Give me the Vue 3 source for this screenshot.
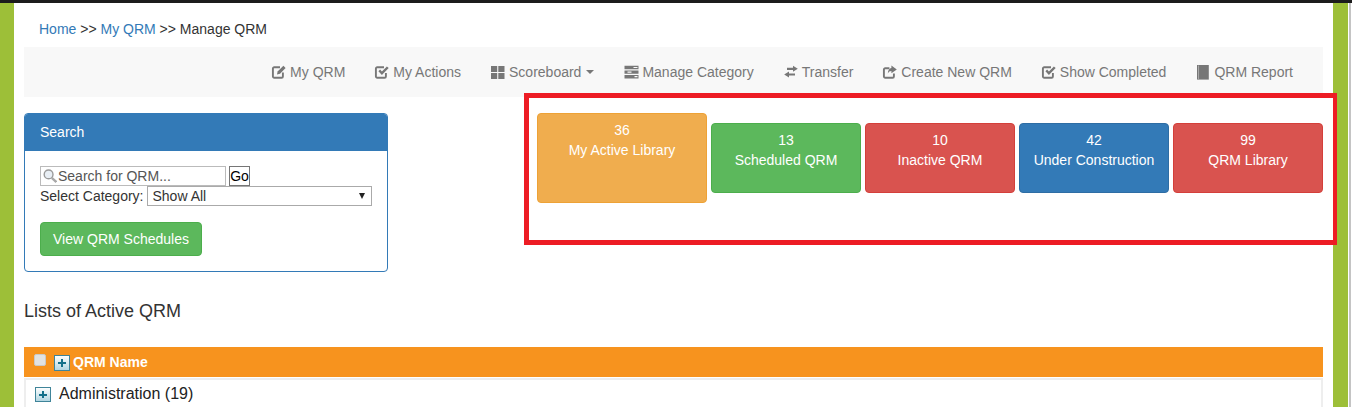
<script setup>
const navItems = [
  { label: 'My QRM', icon: 'edit' },
  { label: 'My Actions', icon: 'check' },
  { label: 'Scoreboard', icon: 'grid', caret: true },
  { label: 'Manage Category', icon: 'tasks' },
  { label: 'Transfer', icon: 'transfer' },
  { label: 'Create New QRM', icon: 'share' },
  { label: 'Show Completed', icon: 'check' },
  { label: 'QRM Report', icon: 'book' }
]
const tiles = [
  { count: 36, label: 'My Active Library', tone: 'warning', big: true },
  { count: 13, label: 'Scheduled QRM', tone: 'success' },
  { count: 10, label: 'Inactive QRM', tone: 'danger' },
  { count: 42, label: 'Under Construction', tone: 'primary' },
  { count: 99, label: 'QRM Library', tone: 'danger' }
]
</script>

<template>
  <div class="window">
    <div class="topbar"></div>
    <div class="frame">
      <div class="rail"></div>
      <main class="page">
        <div class="crumbs">
          <a>Home</a> <span>&gt;&gt;</span> <a>My QRM</a> <span>&gt;&gt;</span> Manage QRM
        </div>

        <nav class="nav">
          <a v-for="item in navItems" :key="item.label" class="nav-link">
            <svg class="nav-icon" viewBox="0 0 14 14">
              <template v-if="item.icon === 'edit'">
                <path class="line" d="M8 2.2H2.2A1.3 1.3 0 0 0 .9 3.5V11.4A1.3 1.3 0 0 0 2.2 12.7H9.6A1.3 1.3 0 0 0 10.9 11.4V7.4" />
                <path d="M11.4.8 13.6 3 8 8.7 5 9.6 5.6 6.6Z" />
              </template>
              <template v-else-if="item.icon === 'check'">
                <path class="line" d="M9 2.2H2.2A1.3 1.3 0 0 0 .9 3.5V11.4A1.3 1.3 0 0 0 2.2 12.7H9.6A1.3 1.3 0 0 0 10.9 11.4V8" />
                <path d="M3.4 6.2 5.1 4.6 6.9 6.4 11.9 1.4 13.7 3.1 6.9 9.9Z" />
              </template>
              <template v-else-if="item.icon === 'grid'">
                <path d="M0 1H6.2V7H0ZM7.3 1H13.5V7H7.3ZM0 8.1H6.2V14H0ZM7.3 8.1H13.5V14H7.3Z" />
              </template>
              <template v-else-if="item.icon === 'tasks'">
                <path d="M.5 .8H14.5V4.2H.5ZM.5 5.4H14.5V8.8H.5ZM.5 10H14.5V13.4H.5Z" />
                <path class="cut" d="M9.5 1.9H13.5V3.1H9.5ZM3.5 6.5H7.5V7.7H3.5ZM10.5 11.1H13.5V12.3H10.5Z" />
              </template>
              <template v-else-if="item.icon === 'transfer'">
                <path d="M3 2.8H9V.8L13.8 3.8 9 6.8V4.9H3ZM11 8.5V10.6H5V12.6L.2 9.5 5 6.5V8.5Z" />
              </template>
              <template v-else-if="item.icon === 'share'">
                <path class="line" d="M6.4 3.2H2.2A1.3 1.3 0 0 0 .9 4.5V11.4A1.3 1.3 0 0 0 2.2 12.7H9.6A1.3 1.3 0 0 0 10.9 11.4V8.4" />
                <path d="M8.4.5 13.8 4.4 8.4 8.3V6C6.8 6 5.6 6.8 4.8 8.6 4.9 5.6 6.2 3.2 8.4 2.9Z" />
              </template>
              <template v-else>
                <path d="M1 0H12.8V14.6H1Z" />
                <path class="cut" d="M2.2.6H2.9V14H2.2Z" opacity=".55" />
              </template>
            </svg>
            <span>{{ item.label }}</span>
            <i v-if="item.caret" class="caret"></i>
          </a>
        </nav>

        <section class="summary">
          <div class="panel">
            <div class="panel-heading">Search</div>
            <div class="panel-body">
              <div class="search-line">
                <label class="search-box">
                  <svg class="lens" viewBox="0 0 14 14">
                    <circle cx="5.6" cy="5.4" r="4.4" fill="#e8eef4" stroke="#9a9a9a" stroke-width="1.4" />
                    <path d="M8.8 8.8 13.4 13" stroke="#a8a8a8" stroke-width="2.4" fill="none" />
                  </svg>
                  <input class="search-input" value="Search for QRM..." />
                </label>
                <button class="go" type="button">Go</button>
              </div>
              <div class="select-line">
                <span class="select-label">Select Category:</span>
                <div class="select-wrap">
                  <select class="category"><option>Show All</option></select>
                </div>
              </div>
              <button class="schedule" type="button">View QRM Schedules</button>
            </div>
          </div>

          <div class="tiles">
            <button
              v-for="tile in tiles"
              :key="tile.label"
              type="button"
              class="tile"
              :class="[tile.tone, { big: tile.big }]"
            >
              <span>{{ tile.count }}</span>
              <span>{{ tile.label }}</span>
            </button>
          </div>

          <div class="callout"></div>
        </section>

        <h4 class="list-title">Lists of Active QRM</h4>

        <div class="table-head">
          <span class="fake-check"></span>
          <span class="plus"></span>
          <span class="head-label">QRM Name</span>
        </div>
        <div class="table-body">
          <span class="plus row-plus"></span>
          <span class="row-label">Administration (19)</span>
        </div>
      </main>
      <div class="rail right-rail"></div>
      <div class="edge"></div>
    </div>
  </div>
</template>

<style>
html, body { margin: 0; height: 407px; overflow: hidden; background: #fff; }
</style>

<style scoped>
* { box-sizing: border-box; }
.window {
  height: 407px;
  overflow: hidden;
  font-family: "Liberation Sans", Arial, sans-serif;
  font-size: 14px;
  line-height: 20px;
  color: #333;
  background: #fff;
}
.topbar { height: 3px; background: #1c1c1c; }
.frame { display: flex; height: 404px; }
.rail { width: 14px; flex: none; background: #9dbf38; }
.right-rail { width: 15px; }
.edge { width: 2px; margin-left: 1px; flex: none; background: #c4c4c4; }
.page { width: 1319px; flex: none; padding: 16px 10px 0; }
.crumbs { height: 20px; margin: 0 0 8px 15px; }
.crumbs a { color: #337ab7; }
.crumbs span { color: #333; }
.nav {
  display: flex;
  justify-content: flex-end;
  height: 50px;
  padding-right: 15px;
  background: #f8f8f8;
}
.nav-link {
  display: flex;
  align-items: center;
  gap: 4px;
  padding: 0 15px;
  color: #777;
  white-space: nowrap;
}
.nav-icon { width: 14px; height: 14px; fill: #777; flex: none; margin-top: -1px; overflow: visible; }
.nav-icon .cut { fill: #f8f8f8; }
.nav-icon .line { fill: none; stroke: #777; stroke-width: 1.9; }
.caret {
  width: 0;
  height: 0;
  margin-left: 1px;
  border-top: 4px solid #777;
  border-left: 4px solid transparent;
  border-right: 4px solid transparent;
}
.summary {
  position: relative;
  display: flex;
  justify-content: space-between;
  align-items: flex-start;
  margin-top: 16px;
}
.panel {
  width: 364px;
  height: 159px;
  border: 1px solid #337ab7;
  border-radius: 4px;
  background: #fff;
}
.panel-heading {
  height: 37px;
  padding: 8px 15px;
  background: #337ab7;
  color: #fff;
  border-radius: 3px 3px 0 0;
}
.panel-body { padding: 15px; }
.search-line { display: flex; gap: 3px; height: 20px; }
.search-box {
  display: flex;
  align-items: center;
  width: 186px;
  height: 20px;
  padding-left: 2px;
  border: 1px solid #bbb;
  background: #fff;
}
.lens { width: 14px; height: 14px; flex: none; }
.search-input {
  flex: 1;
  min-width: 0;
  padding: 0 0 0 1px;
  border: 0;
  outline: 0;
  font: 14px/18px "Liberation Sans", Arial, sans-serif;
  color: #555;
  background: transparent;
}
.go {
  width: 21px;
  height: 20px;
  padding: 0;
  border: 1px solid #767676;
  background: #fff;
  font: 14px/18px "Liberation Sans", Arial, sans-serif;
  color: #000;
}
.select-line { display: flex; align-items: center; gap: 3px; height: 20px; }
.select-label { flex: none; white-space: nowrap; }
.select-wrap { position: relative; width: 225px; height: 20px; flex: none; }
.select-wrap::after {
  content: "";
  position: absolute;
  right: 7px;
  top: 7px;
  border-top: 6px solid #222;
  border-left: 3.5px solid transparent;
  border-right: 3.5px solid transparent;
  pointer-events: none;
}
.category {
  appearance: none;
  display: block;
  width: 225px;
  height: 20px;
  padding: 0 0 0 5px;
  border: 1px solid #aaa;
  border-radius: 0;
  background: #fff;
  font: 14px "Liberation Sans", Arial, sans-serif;
  color: #333;
}
.schedule {
  display: block;
  width: 162px;
  height: 34px;
  margin-top: 16px;
  padding: 0;
  border: 1px solid #4cae4c;
  border-radius: 4px;
  background: #5cb85c;
  color: #fff;
  font: 14px/20px "Liberation Sans", Arial, sans-serif;
}
.tiles { display: flex; align-items: center; gap: 4px; height: 90px; }
.tile {
  display: flex;
  flex-direction: column;
  align-items: center;
  justify-content: flex-start;
  width: 150px;
  height: 70px;
  padding: 6px 4px;
  border: 1px solid;
  border-radius: 4px;
  color: #fff;
  font: 14px/20px "Liberation Sans", Arial, sans-serif;
}
.tile.big { width: 170px; height: 90px; }
.warning { background: #f0ad4e; border-color: #eea236; }
.success { background: #5cb85c; border-color: #4cae4c; }
.danger { background: #d9534f; border-color: #d43f3a; }
.primary { background: #337ab7; border-color: #2e6da4; }
.callout {
  position: absolute;
  left: 500px;
  top: -20px;
  width: 813px;
  height: 152px;
  border: 5px solid #ed1c24;
  border-right-width: 4px;
  pointer-events: none;
}
.list-title {
  margin: 29px 0 26px;
  font-size: 18px;
  line-height: 20px;
  font-weight: 400;
  color: #333;
}
.table-head {
  display: flex;
  align-items: center;
  height: 30px;
  padding-left: 10px;
  background: #f7931e;
  color: #fff;
  font-weight: 700;
}
.fake-check {
  width: 12px;
  height: 12px;
  margin: -5px 8px 0 0;
  border: 1px solid #c9c9c9;
  border-radius: 2px;
  background: #e2e2e2;
}
.plus {
  position: relative;
  width: 16px;
  height: 16px;
  margin-top: 2px;
  border: 1px solid #3f8499;
  background: linear-gradient(#fdfefe, #b2d6e2);
  flex: none;
}
.plus::before, .plus::after { content: ""; position: absolute; background: #14708a; }
.plus::before { left: 3px; right: 3px; top: 6px; height: 2px; }
.plus::after { top: 3px; bottom: 3px; left: 6px; width: 2px; }
.head-label { margin-left: 3px; }
.table-body {
  display: flex;
  align-items: flex-start;
  height: 60px;
  margin-top: 1px;
  padding: 3px 0 0 9px;
  border: 2px solid #eee;
}
.row-plus { width: 16px; height: 15px; margin-top: 4px; }
.row-label { margin: 0 0 0 8px; font-size: 16px; line-height: 22px; color: #222; }
</style>
